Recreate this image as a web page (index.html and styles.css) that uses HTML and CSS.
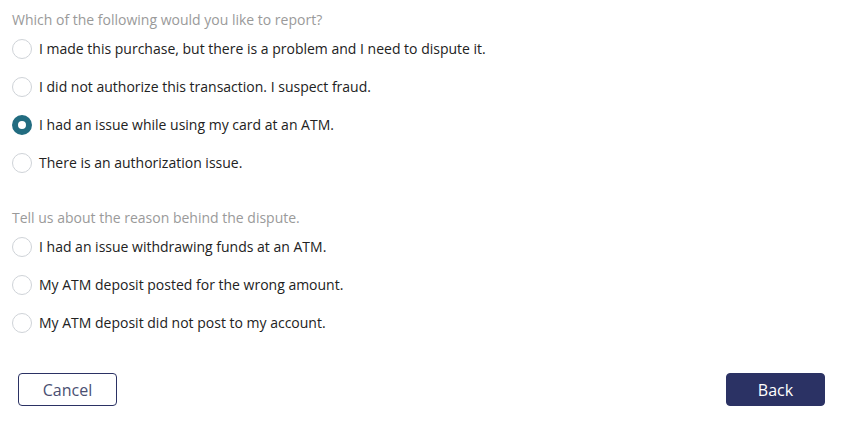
FILE: index.html
```html
<!DOCTYPE html>
<html>
<head>
<meta charset="utf-8">
<link rel="stylesheet" href="styles.css">
</head>
<body>
<div class="page">
  <fieldset class="group">
    <legend class="question">Which of the following would you like to report?</legend>
    <label class="option"><input type="radio" name="q1"><span class="dot"></span><span class="label">I made this purchase, but there is a problem and I need to dispute it.</span></label>
    <label class="option"><input type="radio" name="q1"><span class="dot"></span><span class="label">I did not authorize this transaction. I suspect fraud.</span></label>
    <label class="option"><input type="radio" name="q1" checked><span class="dot"></span><span class="label">I had an issue while using my card at an ATM.</span></label>
    <label class="option"><input type="radio" name="q1"><span class="dot"></span><span class="label">There is an authorization issue.</span></label>
  </fieldset>
  <fieldset class="group second">
    <legend class="question">Tell us about the reason behind the dispute.</legend>
    <label class="option"><input type="radio" name="q2"><span class="dot"></span><span class="label">I had an issue withdrawing funds at an ATM.</span></label>
    <label class="option"><input type="radio" name="q2"><span class="dot"></span><span class="label">My ATM deposit posted for the wrong amount.</span></label>
    <label class="option"><input type="radio" name="q2"><span class="dot"></span><span class="label">My ATM deposit did not post to my account.</span></label>
  </fieldset>
  <div class="actions">
    <button class="btn btn-outline" type="button">Cancel</button>
    <button class="btn btn-primary" type="button">Back</button>
  </div>
</div>
</body>
</html>
```
FILE: styles.css
```css
* { box-sizing: border-box; }
html, body { margin: 0; padding: 0; background: #fff; }
body {
  font-family: "Open Sans", "Noto Sans", sans-serif;
  font-size: 14px;
  color: #222;
}
.page {
  padding: 10px 26px 0 12px;
  width: 851px;
}
.group {
  border: 0;
  margin: 0;
  padding: 0;
  display: flex;
  flex-direction: column;
}
.question {
  padding: 0;
  color: #9a9a9a;
  font-size: 14px;
  line-height: 20px;
}
.option {
  display: flex;
  align-items: center;
  gap: 7px;
  height: 38px;
  cursor: pointer;
}
.option input { display: none; }
.dot {
  width: 20px;
  height: 20px;
  border-radius: 50%;
  border: 1px solid #cfd3d8;
  flex: none;
  background: #fff;
}
.option input:checked + .dot {
  border: 6px solid #226c80;
  background: #fff;
}
.label { line-height: 20px; }
.second { margin-top: 26px; }
.actions {
  display: flex;
  justify-content: space-between;
  margin-top: 31px;
  padding-left: 6px;
}
.btn {
  font-family: "Open Sans", "Noto Sans", sans-serif;
  font-size: 16px;
  width: 99px;
  height: 33px;
  border-radius: 4px;
  cursor: pointer;
}
.btn-outline {
  background: #fff;
  border: 1px solid #2b3264;
  color: #4a4f72;
}
.btn-primary {
  background: #2b3264;
  border: 1px solid #2b3264;
  color: #fff;
}
```
